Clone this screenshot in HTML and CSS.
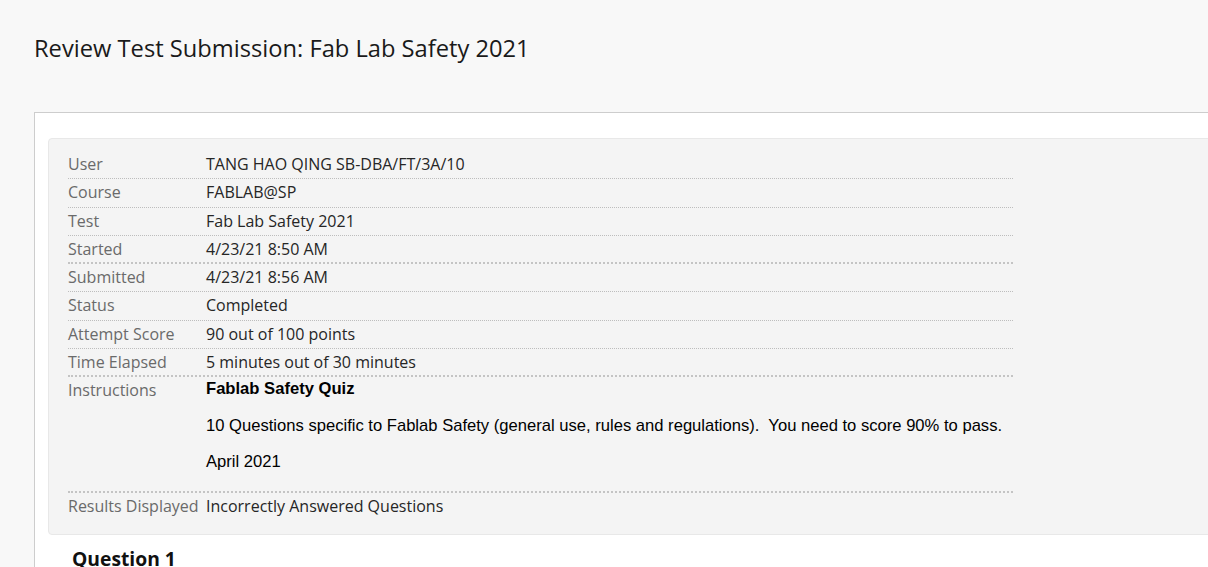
FILE: index.html
```html
<!DOCTYPE html>
<html>
<head>
<meta charset="utf-8">
<link rel="stylesheet" href="styles.css">
</head>
<body>
<h1 class="page-title">Review Test Submission: Fab Lab Safety 2021</h1>
<div class="panel">
  <div class="summary">
    <div class="row"><div class="label">User</div><div class="value">TANG HAO QING SB-DBA/FT/3A/10</div></div>
    <div class="row"><div class="label">Course</div><div class="value">FABLAB@SP</div></div>
    <div class="row"><div class="label">Test</div><div class="value">Fab Lab Safety 2021</div></div>
    <div class="row strong"><div class="label">Started</div><div class="value">4/23/21 8:50 AM</div></div>
    <div class="row"><div class="label">Submitted</div><div class="value">4/23/21 8:56 AM</div></div>
    <div class="row"><div class="label">Status</div><div class="value">Completed</div></div>
    <div class="row"><div class="label">Attempt Score</div><div class="value">90 out of 100 points</div></div>
    <div class="row strong"><div class="label">Time Elapsed</div><div class="value">5 minutes out of 30 minutes</div></div>
    <div class="row instr"><div class="label">Instructions</div>
      <div class="value vtbinstructions">
        <p><b>Fablab Safety Quiz</b></p>
        <p>10 Questions specific to Fablab Safety (general use, rules and regulations).&nbsp; You need to score 90% to pass.</p>
        <p>April 2021</p>
      </div>
    </div>
    <div class="row last"><div class="label">Results Displayed</div><div class="value">Incorrectly Answered Questions</div></div>
  </div>
  <h3 class="question">Question 1</h3>
</div>
</body>
</html>
```
FILE: styles.css
```css
html, body {
  margin: 0;
  padding: 0;
  background: #f8f8f8;
  overflow: hidden;
}
body {
  font-family: "Open Sans", "Liberation Sans", sans-serif;
  color: #262626;
}
.page-title {
  margin: 0;
  padding: 33px 0 0 34px;
  font-size: 23.7px;
  font-weight: 400;
  line-height: 31px;
  color: #1a1a1a;
  height: 79px;
}
.panel {
  margin-left: 34px;
  width: 1300px;
  background: #fff;
  border: 1px solid #cdcdcd;
  border-right: none;
  padding: 25px 0 0 13px;
}
.summary {
  width: 1230px;
  background: #f4f4f4;
  border: 1px solid #e8e8e8;
  border-radius: 4px;
  padding: 12px 0 14px 19px;
}
.row {
  display: flex;
  width: 945px;
  border-bottom: 1px dotted #bdbdbd;
  line-height: 27.25px;
  font-size: 16px;
}
.row.strong {
  border-bottom: 2px dotted #c4c4c4;
  line-height: 26.25px;
}
.row.instr {
  border-bottom: 2px dotted #c4c4c4;
}
.row.last {
  border-bottom: none;
}
.label {
  width: 138px;
  flex: none;
  color: #6a6a6a;
}
.value {
  color: #262626;
}
.vtbinstructions {
  font-family: "Liberation Sans", Arial, sans-serif;
  font-size: 16.6px;
  color: #000;
  padding-bottom: 2px;
  line-height: 20px;
  padding-top: 2px;
}
.vtbinstructions p {
  margin: 0 0 16.5px 0;
}
.question {
  margin: 12px 0 0 24px;
  font-size: 19.3px;
  font-weight: 700;
  line-height: 24px;
  color: #111;
}
```
